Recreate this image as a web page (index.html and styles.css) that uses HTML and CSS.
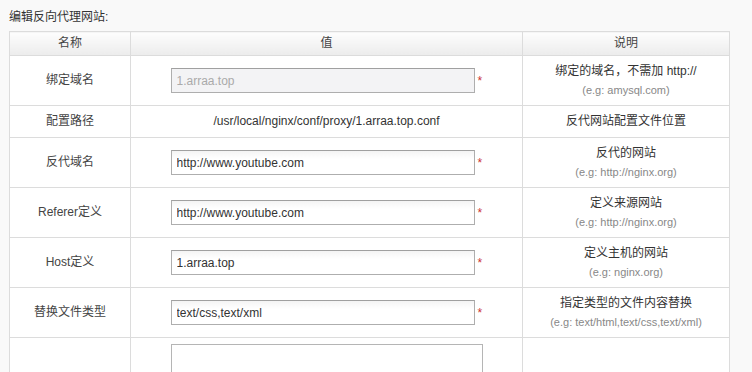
FILE: index.html
```html
<!DOCTYPE html>
<html lang="zh">
<head>
  <meta charset="UTF-8">
  <title>编辑反向代理网站</title>
  <link rel="stylesheet" href="styles.css">
</head>
<body>

  <div class="title">编辑反向代理网站:</div>

  <table class="proxy-table">
    <colgroup>
      <col class="col-name">
      <col class="col-value">
      <col class="col-desc">
    </colgroup>
    <tr>
      <th>名称</th>
      <th>值</th>
      <th>说明</th>
    </tr>
    <tr>
      <td>绑定域名</td>
      <td><input class="field" type="text" value="1.arraa.top" disabled><span class="req">*</span></td>
      <td>
        <div class="desc">绑定的域名，不需加 http://</div>
        <div class="hint">(e.g: amysql.com)</div>
      </td>
    </tr>
    <tr>
      <td>配置路径</td>
      <td>/usr/local/nginx/conf/proxy/1.arraa.top.conf</td>
      <td><div class="desc">反代网站配置文件位置</div></td>
    </tr>
    <tr>
      <td>反代域名</td>
      <td><input class="field" type="text" value="http://www.youtube.com"><span class="req">*</span></td>
      <td>
        <div class="desc">反代的网站</div>
        <div class="hint">(e.g: http://nginx.org)</div>
      </td>
    </tr>
    <tr>
      <td>Referer定义</td>
      <td><input class="field" type="text" value="http://www.youtube.com"><span class="req">*</span></td>
      <td>
        <div class="desc">定义来源网站</div>
        <div class="hint">(e.g: http://nginx.org)</div>
      </td>
    </tr>
    <tr>
      <td>Host定义</td>
      <td><input class="field" type="text" value="1.arraa.top"><span class="req">*</span></td>
      <td>
        <div class="desc">定义主机的网站</div>
        <div class="hint">(e.g: nginx.org)</div>
      </td>
    </tr>
    <tr>
      <td>替换文件类型</td>
      <td><input class="field" type="text" value="text/css,text/xml"><span class="req">*</span></td>
      <td>
        <div class="desc">指定类型的文件内容替换</div>
        <div class="hint">(e.g: text/html,text/css,text/xml)</div>
      </td>
    </tr>
    <tr>
      <td></td>
      <td class="area-cell"><textarea class="area"></textarea></td>
      <td></td>
    </tr>
  </table>

</body>
</html>
```

FILE: styles.css
```css
* { box-sizing: border-box; }

body {
  margin: 0;
  padding: 8px 9px;
  background: #f9f9f9;
  font-family: 'Liberation Sans', Arial, 'Noto Sans CJK SC', sans-serif;
  font-size: 12px;
  color: #333;
}

.title {
  line-height: 19px;
  margin-bottom: 4px;
}

.proxy-table {
  width: 720px;
  border-collapse: collapse;
  background: #fff;
  table-layout: fixed;
}

.col-name { width: 121px; }
.col-value { width: 392px; }
.col-desc { width: 207px; }

.proxy-table th,
.proxy-table td {
  border: 1px solid #dcdcdc;
  text-align: center;
  vertical-align: middle;
  line-height: 19px;
  padding: 6px 4px;
}

.proxy-table th {
  height: 24px;
  padding: 0 4px;
  font-weight: normal;
  color: #444;
  background: linear-gradient(#fdfdfd, #ececec);
}

.proxy-table td:first-child {
  color: #444;
}

.field {
  width: 304px;
  height: 25px;
  margin: 5px 0;
  padding: 0 5px;
  border: 1px solid #aeaeae;
  border-top-color: #a0a0a0;
  font-family: 'Liberation Sans', Arial, sans-serif;
  font-size: 12px;
  color: #333;
  background: linear-gradient(#f4f4f4, #fff 8px);
  vertical-align: middle;
}

.field:disabled {
  background: #f3f3f5;
  color: #aaa;
}

.req {
  display: inline-block;
  width: 5px;
  margin-left: 3px;
  color: #c33;
  font-size: 12px;
  line-height: 12px;
  vertical-align: middle;
  text-align: left;
}

.desc {
  height: 19px;
  color: #333;
}

.hint {
  height: 18px;
  font-size: 11px;
  line-height: 18px;
  color: #888;
}

.area-cell {
  vertical-align: top;
}

.area {
  display: block;
  width: 312px;
  height: 80px;
  margin: 0 auto;
  border: 1px solid #b5b5b5;
  resize: none;
}
```
